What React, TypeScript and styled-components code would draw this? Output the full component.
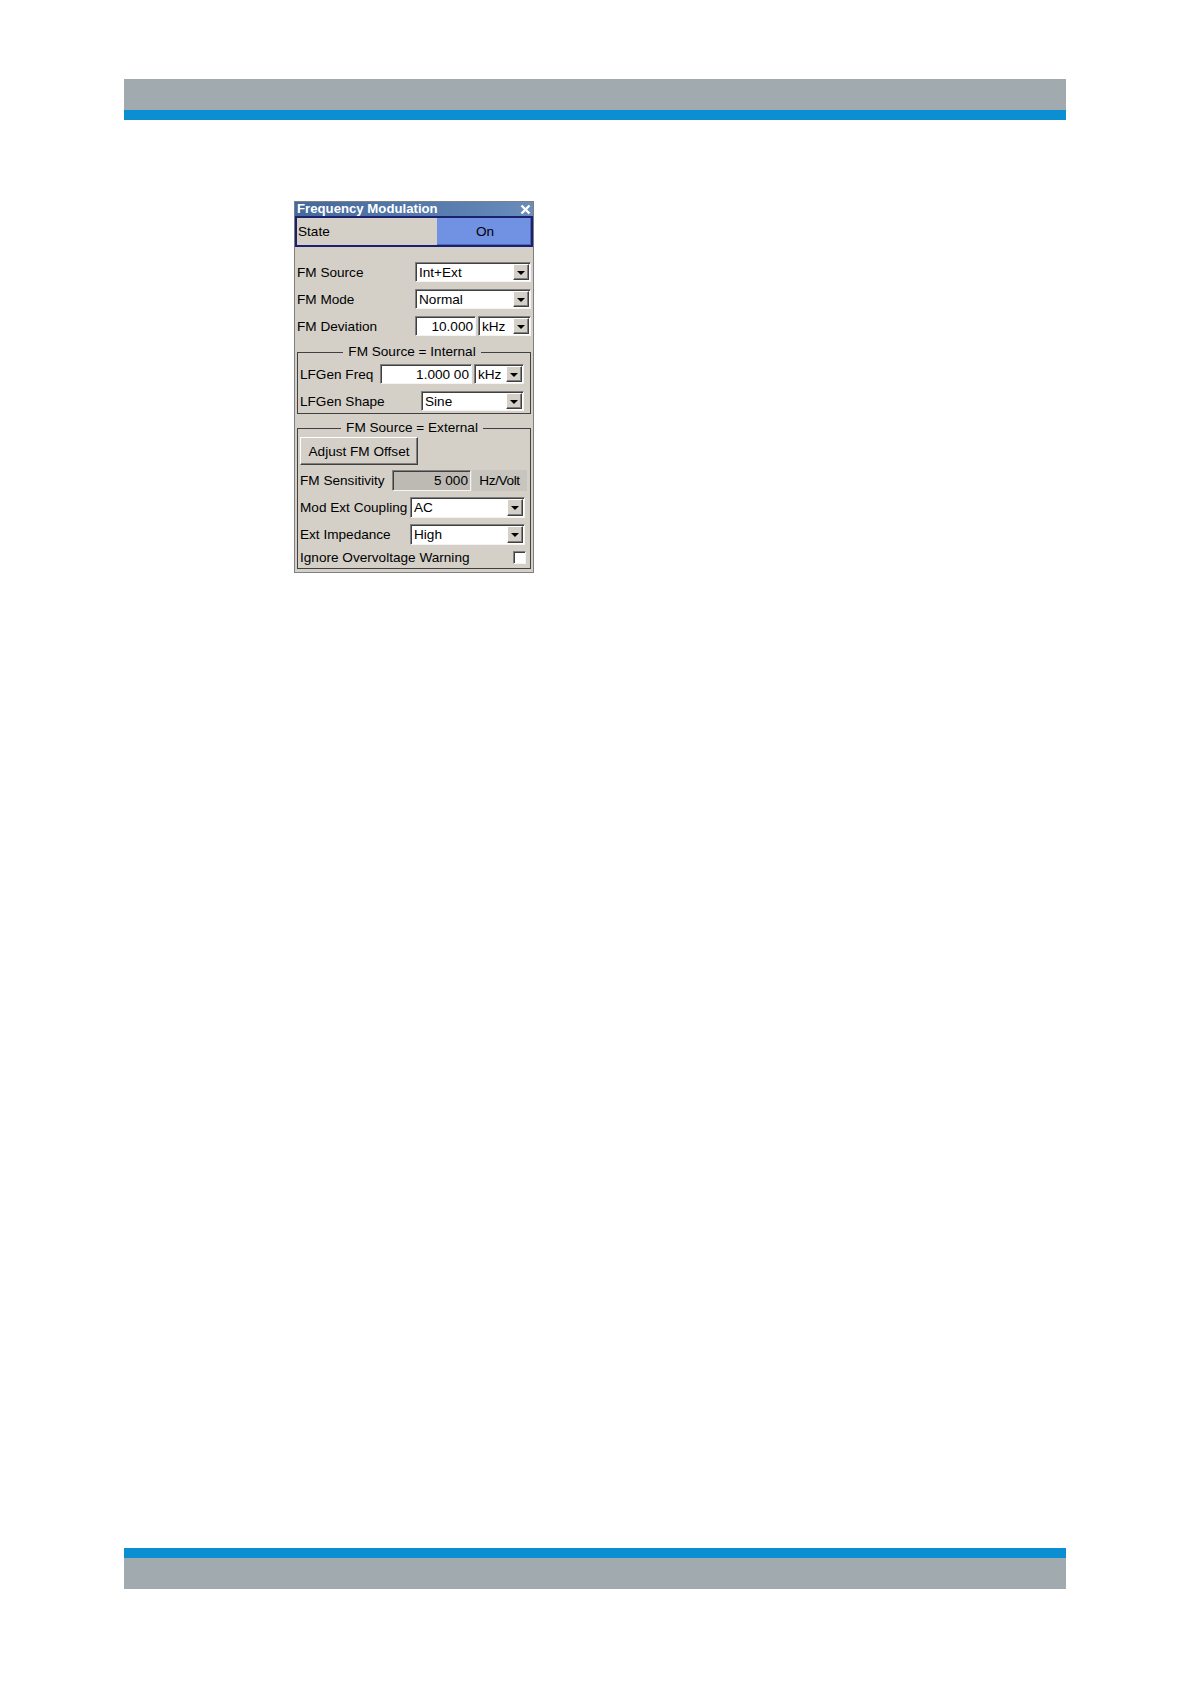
import React from 'react';
import styled, { createGlobalStyle } from 'styled-components';

const GlobalStyle = createGlobalStyle`
  html, body {
    margin: 0;
    padding: 0;
    background: #ffffff;
  }
  body {
    font-family: "Liberation Sans", Arial, sans-serif;
  }
`;

const Page = styled.div`
  width: 1191px;
  min-height: 1684px;
  box-sizing: border-box;
  padding: 79px 0 95px 124px;
  display: flex;
  flex-direction: column;
`;

const Band = styled.div<{ $bottom?: boolean }>`
  width: 942px;
  display: flex;
  flex-direction: ${(p) => (p.$bottom ? 'column-reverse' : 'column')};
  margin-top: ${(p) => (p.$bottom ? 'auto' : '0')};
`;

const Strip = styled.div<{ $color: string; $h: number }>`
  height: ${(p) => p.$h}px;
  background: ${(p) => p.$color};
`;

const Content = styled.div`
  padding: 81px 0 0 170px;
`;

const Panel = styled.div`
  width: 240px;
  box-sizing: border-box;
  border: 1px solid #808080;
  background: #d4d0c8;
  font-size: 13.6px;
  color: #000000;
`;

const TitleBar = styled.div`
  height: 14px;
  padding: 0 2px 0 2px;
  display: flex;
  align-items: center;
  justify-content: space-between;
  background: linear-gradient(to right, #44699a, #5a7fb0 70%, #6a8dbb);
  color: #ffffff;
  font-size: 13.2px;
  font-weight: bold;
  line-height: 14px;
`;

const StateBox = styled.div`
  height: 31px;
  box-sizing: border-box;
  border: 2px solid #1b216e;
  display: flex;
`;

const StateLabel = styled.div`
  flex: 1;
  display: flex;
  align-items: center;
  padding-left: 1px;
`;

const OnButton = styled.div`
  width: 92px;
  display: flex;
  align-items: center;
  justify-content: center;
  padding-left: 2px;
  background: #7191e3;
  box-shadow: inset -1px -1px 0 #4e68b8;
`;

const Body = styled.div`
  padding: 15px 2px 3px 2px;
  display: flex;
  flex-direction: column;
`;

const TopRows = styled.div`
  display: flex;
  flex-direction: column;
  gap: 7px;
`;

const Row = styled.div<{ $h: number; $mt?: number }>`
  height: ${(p) => p.$h}px;
  margin-top: ${(p) => p.$mt ?? 0}px;
  display: flex;
  align-items: center;
  justify-content: space-between;
`;

const Label = styled.span`
  white-space: nowrap;
`;

const Pair = styled.div<{ $gap: number; $mr?: number }>`
  height: 100%;
  display: flex;
  gap: ${(p) => p.$gap}px;
  margin-right: ${(p) => p.$mr ?? 0}px;
`;

const Field = styled.div<{ $w: number; $right?: boolean; $bg?: string }>`
  width: ${(p) => p.$w}px;
  height: 100%;
  box-sizing: border-box;
  background: ${(p) => p.$bg ?? '#ffffff'};
  border-style: solid;
  border-width: 1px;
  border-color: #808080 #f4f4f4 #f4f4f4 #808080;
  box-shadow: inset 1px 1px 0 #404040;
  display: flex;
  align-items: center;
  justify-content: ${(p) => (p.$right ? 'flex-end' : 'flex-start')};
  padding: 0 2px 0 3px;
  white-space: nowrap;
`;

const DropBox = styled.div<{ $w: number; $mr?: number }>`
  width: ${(p) => p.$w}px;
  height: 100%;
  margin-right: ${(p) => p.$mr ?? 0}px;
  box-sizing: border-box;
  background: #ffffff;
  border-style: solid;
  border-width: 1px;
  border-color: #808080 #f4f4f4 #f4f4f4 #808080;
  box-shadow: inset 1px 1px 0 #404040;
  display: flex;
  align-items: stretch;
  padding: 1px 1px 1px 2px;
`;

const DropText = styled.span`
  flex: 1;
  display: flex;
  align-items: center;
  padding-left: 1px;
  white-space: nowrap;
`;

const ArrowButton = styled.span`
  width: 16px;
  box-sizing: border-box;
  background: #d4d0c8;
  border-style: solid;
  border-width: 1px;
  border-color: #ffffff #404040 #404040 #ffffff;
  box-shadow: inset -1px -1px 0 #808080;
  display: flex;
  align-items: center;
  justify-content: center;
  &::after {
    content: '';
    width: 0;
    height: 0;
    border-left: 4px solid transparent;
    border-right: 4px solid transparent;
    border-top: 4px solid #000000;
    margin: 1px 1px 0 0;
  }
`;

const UnitBox = styled.div<{ $w: number }>`
  width: ${(p) => p.$w}px;
  height: 100%;
  background: #c8c5bf;
  display: flex;
  align-items: center;
  justify-content: center;
  letter-spacing: -0.4px;
`;

const Group = styled.fieldset<{ $mt: number; $pt: number }>`
  margin: ${(p) => p.$mt}px 0 0 0;
  padding: ${(p) => p.$pt}px 6px 2px 2px;
  border: 1px solid #404040;
  min-width: 0;
  display: flex;
  flex-direction: column;
`;

const Legend = styled.legend`
  margin: 0 auto;
  padding: 0 5px;
  line-height: 14px;
`;

const GroupRows = styled.div`
  display: flex;
  flex-direction: column;
  gap: 7px;
`;

const PushButton = styled.div`
  width: 118px;
  height: 28px;
  box-sizing: border-box;
  background: #d4d0c8;
  border-style: solid;
  border-width: 1px;
  border-color: #ffffff #404040 #404040 #ffffff;
  box-shadow: inset -1px -1px 0 #808080;
  display: flex;
  align-items: center;
  justify-content: center;
`;

const CheckBox = styled.span`
  width: 13px;
  height: 13px;
  box-sizing: border-box;
  margin-right: -2px;
  background: #ffffff;
  border-style: solid;
  border-width: 1px;
  border-color: #808080 #f4f4f4 #f4f4f4 #808080;
  box-shadow: inset 1px 1px 0 #404040;
`;

const CloseIcon = () => (
  <svg width="11" height="11" viewBox="0 0 11 11">
    <path d="M1.5 1.5 L9.5 9.5 M9.5 1.5 L1.5 9.5" stroke="#ffffff" strokeWidth="2.4" />
  </svg>
);

const Dropdown = ({ w, value, mr }: { w: number; value: string; mr?: number }) => (
  <DropBox $w={w} $mr={mr}>
    <DropText>{value}</DropText>
    <ArrowButton />
  </DropBox>
);

const App = () => {
  return (
    <>
      <GlobalStyle />
      <Page>
        <Band>
          <Strip $color="#a1aaae" $h={31} />
          <Strip $color="#0b8ed2" $h={10} />
        </Band>
        <Content>
          <Panel>
            <TitleBar>
              <span>Frequency Modulation</span>
              <CloseIcon />
            </TitleBar>
            <StateBox>
              <StateLabel>State</StateLabel>
              <OnButton>On</OnButton>
            </StateBox>
            <Body>
              <TopRows>
                <Row $h={20}>
                  <Label>FM Source</Label>
                  <Dropdown w={116} value="Int+Ext" />
                </Row>
                <Row $h={20}>
                  <Label>FM Mode</Label>
                  <Dropdown w={116} value="Normal" />
                </Row>
                <Row $h={20}>
                  <Label>FM Deviation</Label>
                  <Pair $gap={2}>
                    <Field $w={61} $right>10.000</Field>
                    <Dropdown w={53} value="kHz" />
                  </Pair>
                </Row>
              </TopRows>

              <Group $mt={9} $pt={5}>
                <Legend>FM Source = Internal</Legend>
                <GroupRows>
                  <Row $h={20}>
                    <Label>LFGen Freq</Label>
                    <Pair $gap={2}>
                      <Field $w={92} $right>1.000 00</Field>
                      <Dropdown w={50} value="kHz" />
                    </Pair>
                  </Row>
                  <Row $h={20}>
                    <Label>LFGen Shape</Label>
                    <Dropdown w={103} value="Sine" />
                  </Row>
                </GroupRows>
              </Group>

              <Group $mt={7} $pt={2}>
                <Legend>FM Source = External</Legend>
                <PushButton>Adjust FM Offset</PushButton>
                <Row $h={21} $mt={5}>
                  <Label>FM Sensitivity</Label>
                  <Pair $gap={1} $mr={-3}>
                    <Field $w={79} $right $bg="#bdbab4">5 000</Field>
                    <UnitBox $w={55}>Hz/Volt</UnitBox>
                  </Pair>
                </Row>
                <Row $h={21} $mt={6}>
                  <Label>Mod Ext Coupling</Label>
                  <Dropdown w={115} value="AC" mr={-1} />
                </Row>
                <Row $h={21} $mt={6}>
                  <Label>Ext Impedance</Label>
                  <Dropdown w={115} value="High" mr={-1} />
                </Row>
                <Row $h={18} $mt={3}>
                  <Label>Ignore Overvoltage Warning</Label>
                  <CheckBox />
                </Row>
              </Group>
            </Body>
          </Panel>
        </Content>
        <Band $bottom>
          <Strip $color="#a1aaae" $h={31} />
          <Strip $color="#0b8ed2" $h={10} />
        </Band>
      </Page>
    </>
  );
};

export default App;
